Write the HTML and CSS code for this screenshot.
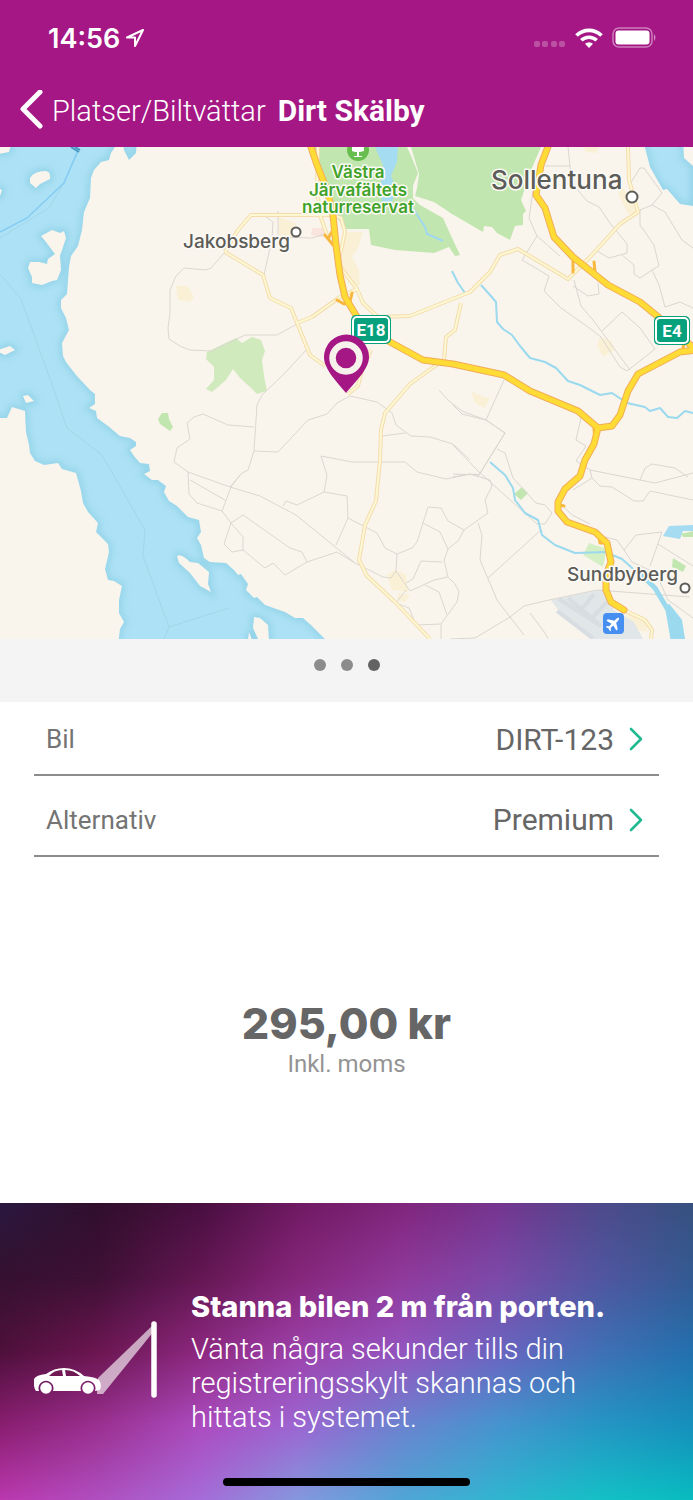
FILE: index.html
```html
<!DOCTYPE html>
<html lang="sv">
<head>
  <meta charset="UTF-8" />
  <meta name="viewport" content="width=device-width, initial-scale=1.0" />
  <title>Dirt Skälby</title>
  <link rel="stylesheet" href="styles.css">
</head>
<body>

  <header class="header">
    <div class="status">
      <span class="time">14:56</span>
      <svg class="location" width="20" height="20" viewBox="0 0 20 20"><path d="M18 2 2 9.500h8V18z" fill="none" stroke="#fff" stroke-width="2" stroke-linejoin="round"/></svg>
      <svg class="signal" width="32" height="7" viewBox="0 0 32 7" fill="#fff" opacity=".25"><rect width="6" height="6" rx="2"/><rect x="8" width="6" height="6" rx="2"/><rect x="17" width="6" height="6" rx="2"/><rect x="25" width="6" height="6" rx="2"/></svg>
      <svg width="28" height="20" viewBox="0 0 28 20" fill="none" stroke="#fff"><path d="M1.500 7.500a18 18 0 0 1 25 0" stroke-width="3.800"/><path d="M6.300 12.300a11.200 11.200 0 0 1 15.400 0" stroke-width="3.600"/><path d="M14 20l-4-4.200a6 6 0 0 1 8 0z" fill="#fff" stroke="none"/></svg>
      <svg width="46" height="22" viewBox="0 0 46 22"><rect x="1" y="1" width="39" height="19" rx="6" fill="none" stroke="#fff" stroke-opacity=".45" stroke-width="1.500"/><rect x="3.500" y="3.500" width="34" height="14" rx="3" fill="#fff"/><path d="M42 7q3 3.500 0 7z" fill="#fff" opacity=".5"/></svg>
    </div>
    <nav class="nav">
      <a class="back" href="#">
        <svg width="26" height="42" viewBox="0 0 26 42"><path d="M22 2 5 19l17 17" fill="none" stroke="#fff" stroke-width="5" stroke-linecap="round" stroke-linejoin="round"/></svg>
        <span>Platser/Biltvättar</span>
      </a>
      <h1>Dirt Skälby</h1>
    </nav>
  </header>

  <main>
    <svg class="map" viewBox="0 147 693 492" role="img" aria-label="Karta">
      <defs>
        <filter id="soft" x="-10%" y="-10%" width="120%" height="120%"><feGaussianBlur stdDeviation="3"/></filter>
        <g id="land">
          <path d="M115 147 111 153 109 160 101 162 94 170 91 178 90 198 84 212 82 230 78 246 71 256 69 267 67 294 61 300 61 308 66 318 69 330 62 343 63 356 66 362 76 375 90 390 95 394 95 404 89 408 96 411 97 418 108 426 120 436 130 438 136 442 136 446 130 450 134 456 140 463 149 464 150 471 144 474 152 480 158 480 166 486 164 492 169 501 177 506 188 517 199 520 201 532 197 538 201 545 204 558 210 562 226 563 234 570 238 575 241 574 248 584 246 590 254 598 257 597 265 605 285 612 295 618 303 618 312 626 326 640H700V140H683L684 158 693 166 693 206 680 204 667 189 663 190 650 167 643 140H137L136 153 129 160 124 150 123 140z"/>
          <path d="M-5 418 7 418 12 407 25 411 26 432 29 445 30 453 35 461 44 465 58 463 62 469 76 473 81 491 83 503 88 512 98 523 96 532 101 537 108 544 109 552 105 569 108 580 114 581 122 586 119 600 119 613 124 622 120 629 118 645H-5z"/>
          <path d="M41 236 52 230 60 233 64 231 66 238 60 256 61 270 57 280 52 281 42 285 32 283 32 277 28 268 30 262 39 262 47 264 48 259 55 254 46 242z"/>
          <path d="M30 178Q34 171 46 171 51 172 50 179L40 184 36 188 30 183zM-2 145H11L9 152-2 154zM-2 350 10 346 15 350 5 355-2 352zM23 396 28 395 34 401 26 403zM-2 188 2 190 0 196-2 196z"/>
          <path d="M177 556Q181 553 190 562L198 563 209 572 208 584 211 592 200 586 190 573 179 563zM254 617 260 618 268 625 269 641H259L253 628zM249 632 252 640H248z"/>
        </g>
        <g id="minor">
          <path d="M225 252 238 230 251 215 318 215 333 215 341 218 345 232 338 264 357 289M225 252 263 275 270 298 291 308 310 355 325 366M297 323 312 317 340 297 357 289 363 303 378 317 410 316 470 292 490 272 500 255 518 249 568 279 590 257 620 224 638 212 629 180 628 147"/>
          <path d="M461 303 455 330 446 337 444 360 432 368 410 384 385 413 381 430 380 460 376 501 365 525 359 560 367 576 395 602 430 639M348 394 358 386 362 370 371 350M318 147 317 190 320 215 327 235M624 610 645 620 652 630 651 639"/>
        </g>
        <g id="motorway">
          <path d="M310 144 317 165 327 190 333 215 336 245 340 275 345 297 357 317 390 342 412 354 423 360 453 364 504 375 530 391 578 411 598 428"/>
          <path d="M549 144 541 165 536 195 545 208 554 237 573 257 608 285 640 302 662 320 696 350"/>
          <path d="M696 350 680 352 638 374 628 391 620 415 612 426 598 428 594 444 585 460 580 476 565 489 558 502 558 511 567 522 595 532 607 543 611 562 606 575 606 590 611 602 624 610"/>
        </g>
      </defs>

      <rect y="147" width="693" height="492" fill="#ade1f5"/>
      <g fill="none" stroke="#93d3e8" stroke-width="6" filter="url(#soft)"><use href="#land"/></g>
      <use href="#land" fill="#f9f5ed"/>
      <g fill="none" stroke="#a2d7e9">
        <path d="M0 274 21 299 54 390 67 428 102 455 145 530 143 556 169 627 229 608M169 627 164 639M0 238 49 208 61 188 78 153"/>
        <path d="M0 232 27 218 64 183 78 150" stroke="#84ccf3" stroke-width="1.500"/>
        <path d="M71 147 79 152M75 147 80 150" stroke="#4698c0" stroke-width="2"/>
      </g>

      <!-- parks and built-up areas -->
      <g fill="#c2e6b0">
        <path d="M313 147 325 185 333 212 345 229 369 229 371 245 395 250 434 253 449 247 455 256 460 255 452 238 443 218 420 205 413 198 413 186 418 173 412 158 407 147z"/>
        <path d="M411 147 419 174 417 188 415 196 434 202 452 214 483 232 484 226 492 227 497 233 510 240 515 226 523 225 523 214 526 211 521 200 531 170 541 147z"/>
        <path d="M162 413 168 413 169 419 173 427 170 431 160 424 158 419zM522 487 528 493 521 500 514 494zM673 558 686 566 683 572 672 567z"/>
        <path d="M207 352 236 338 242 343 252 337 261 340 265 351 262 360 264 376 267 391 257 394 250 387 240 378 233 369 226 380 212 392 206 389 214 380 214 367 206 359z" fill="#d0eabd"/>
        <path d="M589 543 607 549 603 567 583 555z" fill="#d5efc5"/>
      </g>
      <g fill="#faf0d5">
        <path d="M345 232 363 232 358 248 352 257 359 270 360 284 355 289 341 266zM279 217 296 223 294 237 279 235zM176 286 188 286 194 297 190 302 178 300zM600 337 612 341 614 350 603 357 597 345zM472 392 490 399 484 408 474 402zM387 575 394 570 406 574 408 592 392 590zM399 593 410 595 405 602 397 600zM623 187 638 213 628 214 618 194zM583 147H599L596 153 586 152zM626 612 643 616 648 632 625 628z"/>
        <path d="M312 228 326 228 326 238 311 235z" fill="#f9e5de"/>
      </g>
      <path d="M551 600 604 589 614 610 634 622 643 639H590L565 619z" fill="#e1e6e8"/>
      <path d="M559 599 601 626M568 598 598 623M582 609 594 594M593 617 607 602M557 611 593 638" stroke="#d8dde1" stroke-width="4"/>
      <path d="M375 147 383 165 380 190 382 202 392 203 395 186 391 176 397 162 398 147zM663 536 669 526 693 525 693 531 683 531 680 539z" fill="#a5dcf2"/>
      <path d="M408 203 416 213 425 227 427 234 443 241" fill="none" stroke="#a0d9ef" stroke-width="2"/>
      <path d="M681 534 693 531V537L683 537z" fill="#c2e6b0"/>

      <!-- local roads -->
      <g fill="none" stroke="#dcd8d1" stroke-width="1">
        <path d="M225 252 211 268 206 270 184 268 176 276 170 290 170 313 168 328 169 339 180 346 190 350 211 351 245 335 277 335 297 324M307 349 285 373 262 395 257 405 254 451 248 470 242 473 230 487"/>
        <path d="M254 427 228 425 203 414 194 417 187 423 190 439 177 448 174 462 188 472 230 487 260 496 296 515 355 563M188 472 189 494 197 503 222 511 231 487 240 475M190 480 225 500M222 511 231 523 224 544 232 552 243 550 265 568 273 563 285 575 307 562 302 552 290 548 243 515 231 523 243 537 243 550"/>
        <path d="M307 562 337 552 355 563M283 506 286 501 297 505 324 492 347 496 348 518 336 545M324 492 327 475 321 456 352 462 405 462 417 472 446 479 470 474M254 451 278 452 308 420 327 414 337 403 350 396 377 402 392 413 396 425 411 436 430 437 453 444 470 460M382 436 405 433"/>
        <path d="M348 518 377 533 385 548 397 554 412 548 417 542 428 507 441 508 448 521 464 530 458 541 448 549 444 560 448 577 434 580 410 591 396 571 397 554M423 523 440 532 448 549M442 562 421 561 413 579 406 583M355 563 383 577 391 578 396 571M406 590 396 603 409 608 416 625 441 624 457 602 459 592 455 584 448 577M425 585 439 592 447 615M441 624V639"/>
        <path d="M264 275 272 239 273 222 266 217M278 211V237L312 238 325 234M439 390 449 401 462 411 486 420 505 433 479 475 453 474"/>
      </g>
      <g fill="none" stroke="#dad7d0">
        <path d="M453 405 462 414 486 420 505 433 479 475 473 474M453 477 470 474 490 480 492 486 485 500 488 513 464 530M453 445 479 472 537 524 545 524 552 513M478 523 482 535 480 560 497 600 510 617 524 635M488 578 541 530M510 617 524 606 549 600 597 590 690 597M450 639 475 638 510 617M530 613 545 633 548 639M497 449 505 453 513 478 536 503 545 505 552 513"/>
        <path d="M581 418 576 440 586 446 576 461 590 470 655 483 693 473M590 470 592 478 573 490M592 478 600 486 612 487 634 501 643 501 650 491 693 500M640 480 645 468 652 464 675 468 688 477M562 505 572 515 590 524M504 380 495 400 486 420"/>
        <path d="M568 147 570 166 571 182 587 201 599 207 610 223 627 244 627 253 609 258 597 251M545 166 570 166M536 170 529 218 537 236 522 260 549 276 544 291 561 308 588 327 601 337 620 367 627 371 655 349 640 328 622 312 602 331M537 236 560 256M574 280 581 306 593 320 630 370M573 286 588 296 599 294 598 283M622 255 634 265 634 274 640 278 652 270 659 285 665 307 680 302 693 308M652 270 659 266 654 245 640 225 640 210 652 205 662 193 644 168 640 168 630 184M652 205 665 212 682 240 693 248"/>
        <path d="M605 537 617 540 624 550 632 562 656 573 668 600 693 618M624 550 636 535 662 532 650 566M658 544 693 566"/>
      </g>

      <g fill="none" stroke="#9bd9ef" stroke-width="2" stroke-linejoin="round">
        <path d="M452 271 458 283 465 293M481 285 490 295 496 302 497 322 503 329 512 335 520 346 530 358 545 362 556 368 568 381 580 385 600 395 612 393 627 403 645 407 650 411 660 408 668 417 677 418 685 411 693 413M490 462 505 475 513 488 515 500 525 513 538 520 542 535 555 545 575 553 605 552 622 559 640 575"/>
        <path d="M636 570 655 588 668 610 673 639" stroke-width="5"/>
        <path d="M669 605 675 639H684L681 620z" fill="#9bd9ef"/>
      </g>

      <g fill="none" stroke-linejoin="round">
        <use href="#minor" stroke="#f4dcac" stroke-width="4"/>
        <use href="#minor" stroke="#fdf8d4" stroke-width="2"/>
      </g>

      <!-- motorways: orange casing with yellow centre -->
      <g fill="none" stroke-linejoin="round" stroke-linecap="round">
        <use href="#motorway" stroke="#f2ac57" stroke-width="7"/>
        <path d="M325 235 333 245M329 237 334 228M337 300 344 304 350 302 352 293M573 259 573 272M594 262 595 272M683 349 684 340M594 429 595 442M598 532 600 543 607 543M560 505 564 506" stroke="#f7b83d" stroke-width="3"/>
        <use href="#motorway" stroke="#ffdc35" stroke-width="5"/>
      </g>

      <!-- nature reserve marker -->
      <circle cx="358" cy="150" r="11" fill="#67bd4d"/>
      <path d="M352 147h12v4l-4 1h-1v4h3v1h-8v-1h3v-4h-2l-3-1z" fill="#fff"/>

      <g class="label park" text-anchor="middle">
        <text x="358" y="178">Västra</text>
        <text x="358" y="196">Järvafältets</text>
        <text x="358" y="213">naturreservat</text>
      </g>
      <g class="label">
        <text x="183" y="248" class="town">Jakobsberg</text>
        <text x="491" y="189" class="city">Sollentuna</text>
        <text x="567" y="581" class="town">Sundbyberg</text>
      </g>
      <g fill="#fff" stroke="#5c5c58" stroke-width="2">
        <circle cx="296" cy="232" r="4.500"/>
        <circle cx="632" cy="197" r="5.500"/>
        <circle cx="685" cy="588" r="4.500"/>
      </g>

      <g class="shield">
        <rect x="351" y="315" width="40" height="29" rx="5"/><rect x="353" y="317" width="36" height="25" rx="4" class="ring"/>
        <text x="371" y="336" text-anchor="middle">E18</text>
        <rect x="654" y="316" width="36" height="29" rx="5"/><rect x="656" y="318" width="32" height="25" rx="4" class="ring"/>
        <text x="672" y="337" text-anchor="middle">E4</text>
      </g>

      <rect x="603" y="613" width="21" height="21" rx="4" fill="#468ff0"/>
      <path transform="translate(613.500 623.500) rotate(45)" d="M0-8q1.300 1 1.300 3v2.500L7 1v2L1.300 1.500 1 5l2 1.500V8L0 7-3 8V6.500L-1 5-1.300 1.500-7 3V1l5.700-3.500V-5Q-1.300-7 0-8z" fill="#fff"/>

      <path d="M346 393C339 384 324 370 324 357a22.500 22.500 0 0 1 45 0C369 370 353 384 346 393z" fill="#a41784"/>
      <circle cx="346" cy="358" r="13.500" fill="#a41784" stroke="#f6f1ea" stroke-width="6.500"/>
    </svg>

    <div class="dots">
      <button type="button" aria-label="Bild 1"></button>
      <button type="button" aria-label="Bild 2"></button>
      <button type="button" aria-label="Bild 3" class="active"></button>
    </div>

    <div class="options">
      <button type="button" class="option">
        <span class="name">Bil</span>
        <span class="value">DIRT-123</span>
        <svg width="14" height="24" viewBox="0 0 14 24"><path d="M2 2l10 10L2 22" fill="none" stroke="#1fba90" stroke-width="2.600" stroke-linecap="round" stroke-linejoin="round"/></svg>
      </button>
      <button type="button" class="option">
        <span class="name">Alternativ</span>
        <span class="value">Premium</span>
        <svg width="14" height="24" viewBox="0 0 14 24"><path d="M2 2l10 10L2 22" fill="none" stroke="#1fba90" stroke-width="2.600" stroke-linecap="round" stroke-linejoin="round"/></svg>
      </button>
    </div>

    <div class="price">
      <strong>295,00 kr</strong>
      <span>Inkl. moms</span>
    </div>
  </main>

  <footer class="banner">
    <div class="glow glow-1"></div>
    <div class="glow glow-2"></div>
    <div class="glow glow-3"></div>
    <div class="glow glow-4"></div>
    <div class="message">
      <svg width="125" height="77" viewBox="0 0 125 77">
        <path d="M119 4 120 10 69 73H63L64 57z" fill="#fff" opacity=".62"/>
        <path d="M120 3V74" stroke="#fff" stroke-width="5.500" stroke-linecap="round"/>
        <path d="M2 70Q-1 66 0 58 2 54 12 53 20 47 30 47 41 47 50 55 62 56 65 59 68 63 66 69L61 70A7.500 7.500 0 1 0 47 70H19A7.500 7.500 0 1 0 5 70z" fill="#fff"/>
        <path d="M15 55Q20 49 28 49L29 55zM31 49Q40 49 46 55L32 55z" fill="#701954"/>
        <circle cx="12" cy="67" r="5.800" fill="#fff"/><circle cx="54" cy="67" r="5.800" fill="#fff"/>
      </svg>
      <div class="text">
        <h2>Stanna bilen 2 m från porten.</h2>
        <p>Vänta några sekunder tills din registreringsskylt skannas och hittats i systemet.</p>
      </div>
    </div>
    <div class="home-bar"></div>
  </footer>

</body>
</html>
```

FILE: styles.css
```css
* {
  box-sizing: border-box;
}
body {
  margin: 0;
  min-height: 100vh;
  display: flex;
  flex-direction: column;
  background-color: #fff;
  color: #666;
  font-family: Roboto, "Liberation Sans", sans-serif;
}
svg {
  display: block;
  flex: none;
}
button {
  font: inherit;
  color: inherit;
  border: none;
  padding: 0;
  cursor: pointer;
}

/* header */
.header {
  background-color: #a41784;
  color: #fff;
  padding-bottom: 2px;
}
.status {
  display: flex;
  align-items: center;
  gap: 9px;
  height: 76px;
  padding: 0 35px 0 48px;
}
.time {
  font-family: Inter, sans-serif;
  font-size: 27px;
  font-weight: 600;
}
.location {
  margin-left: -4px;
}
.signal {
  margin-left: auto;
  margin-top: 13px;
}
.nav {
  display: flex;
  align-items: center;
  gap: 12px;
  height: 69px;
  padding-left: 18px;
}
.back {
  display: flex;
  align-items: center;
  gap: 8px;
  color: #fff;
  font-size: 29px;
  font-weight: 300;
  text-decoration: none;
}
.nav h1 {
  margin: 0;
  font-size: 30px;
  font-weight: 700;
}

/* map */
main {
  flex: 1;
  display: flex;
  flex-direction: column;
}
.map {
  width: 100%;
  height: auto;
}
.label text {
  font-family: Inter, sans-serif;
  font-weight: 500;
  fill: #5c5c58;
  stroke: #fcfaf5;
  stroke-width: 3px;
  stroke-linejoin: round;
  paint-order: stroke;
}
.label .town {
  font-size: 19px;
}
.label .city {
  font-size: 26px;
}
.park text {
  font-size: 17px;
  font-weight: 600;
  fill: #41a32a;
}
.shield rect {
  fill: #07a17e;
}
.shield .ring {
  stroke: #fff;
  stroke-width: 2px;
}
.shield text {
  font-size: 17px;
  font-weight: 700;
  fill: #fff;
}

.dots {
  display: flex;
  justify-content: center;
  gap: 15px;
  height: 63px;
  padding-top: 20px;
  background-color: #f4f4f4;
}
.dots button {
  width: 12px;
  height: 12px;
  border-radius: 50%;
  background-color: #8c8c8c;
}
.dots .active {
  background-color: #636363;
}

/* choices */
.options {
  padding: 0 34px;
}
.option {
  display: flex;
  align-items: center;
  width: 100%;
  height: 81px;
  padding: 8px 16px 0 12px;
  background: none;
  border-bottom: 2px solid #8c8c8c;
  text-align: left;
}
.option:first-child {
  height: 74px;
  padding-top: 2px;
}
.name {
  flex: 1;
  font-size: 26px;
  color: #747474;
}
.value {
  margin-right: 15px;
  font-size: 30px;
}

.price {
  flex: 1;
  display: flex;
  flex-direction: column;
  align-items: center;
  justify-content: center;
  padding-top: 18px;
}
.price strong {
  font-family: Inter, sans-serif;
  font-size: 43px;
  line-height: 50px;
  font-weight: 800;
}
.price span {
  font-size: 24px;
  line-height: 32px;
  color: #939393;
}

/* banner, built from horizontal colour bands that fade into each other */
.banner {
  position: relative;
  display: flex;
  flex-direction: column;
  justify-content: space-between;
  padding: 86px 34px 14px;
  min-height: 297px;
  color: #fff;
  background: linear-gradient(to right, #2a1840, #300f2c 14%, #480f40 29%, #6f1a62 43%, #80257c 58%, #753590 72%, #4d4a8c 87%, #37517f);
}
.glow {
  position: absolute;
  inset: 0;
}
.glow-1 {
  background: linear-gradient(to right, #35112f, #3e1036 14%, #641752 29%, #86267b 43%, #903a9c 58%, #7c4aa8 72%, #50569f 87%, #335a92);
  mask-image: linear-gradient(transparent, #000 25%);
}
.glow-2 {
  background: linear-gradient(to right, #4e103c, #6b1650 14%, #8d2880 29%, #9c42ab 43%, #9454bf 58%, #6b64c0 72%, #3f70b5 87%, #2370ae);
  mask-image: linear-gradient(transparent 25%, #000 50%);
}
.glow-3 {
  background: linear-gradient(to right, #8a1e70, #9a3090 14%, #ac4cc0 29%, #9c66d2 43%, #6a84d0 58%, #4595cf 72%, #2496c4 87%, #1590bc);
  mask-image: linear-gradient(transparent 50%, #000 75%);
}
.glow-4 {
  background: linear-gradient(to right, #bb38ae, #b04fc0 14%, #a56cd8 29%, #8498de 43%, #50a5d5 58%, #30b5cf 72%, #14c0c6 87%, #08bcc0);
  mask-image: linear-gradient(transparent 75%, #000);
}
.message {
  position: relative;
  display: flex;
  gap: 32px;
}
.message svg {
  margin-top: 32px;
}
.text {
  flex: 1;
  max-width: 424px;
}
.text h2 {
  margin: 0 0 8px;
  font-family: Inter, sans-serif;
  font-size: 29px;
  line-height: 35px;
  font-weight: 800;
}
.text p {
  margin: 0;
  max-width: 420px;
  font-size: 29px;
  line-height: 34px;
  font-weight: 300;
}
.home-bar {
  position: relative;
  align-self: center;
  width: 247px;
  height: 8px;
  border-radius: 4px;
  background-color: #000;
}
```
